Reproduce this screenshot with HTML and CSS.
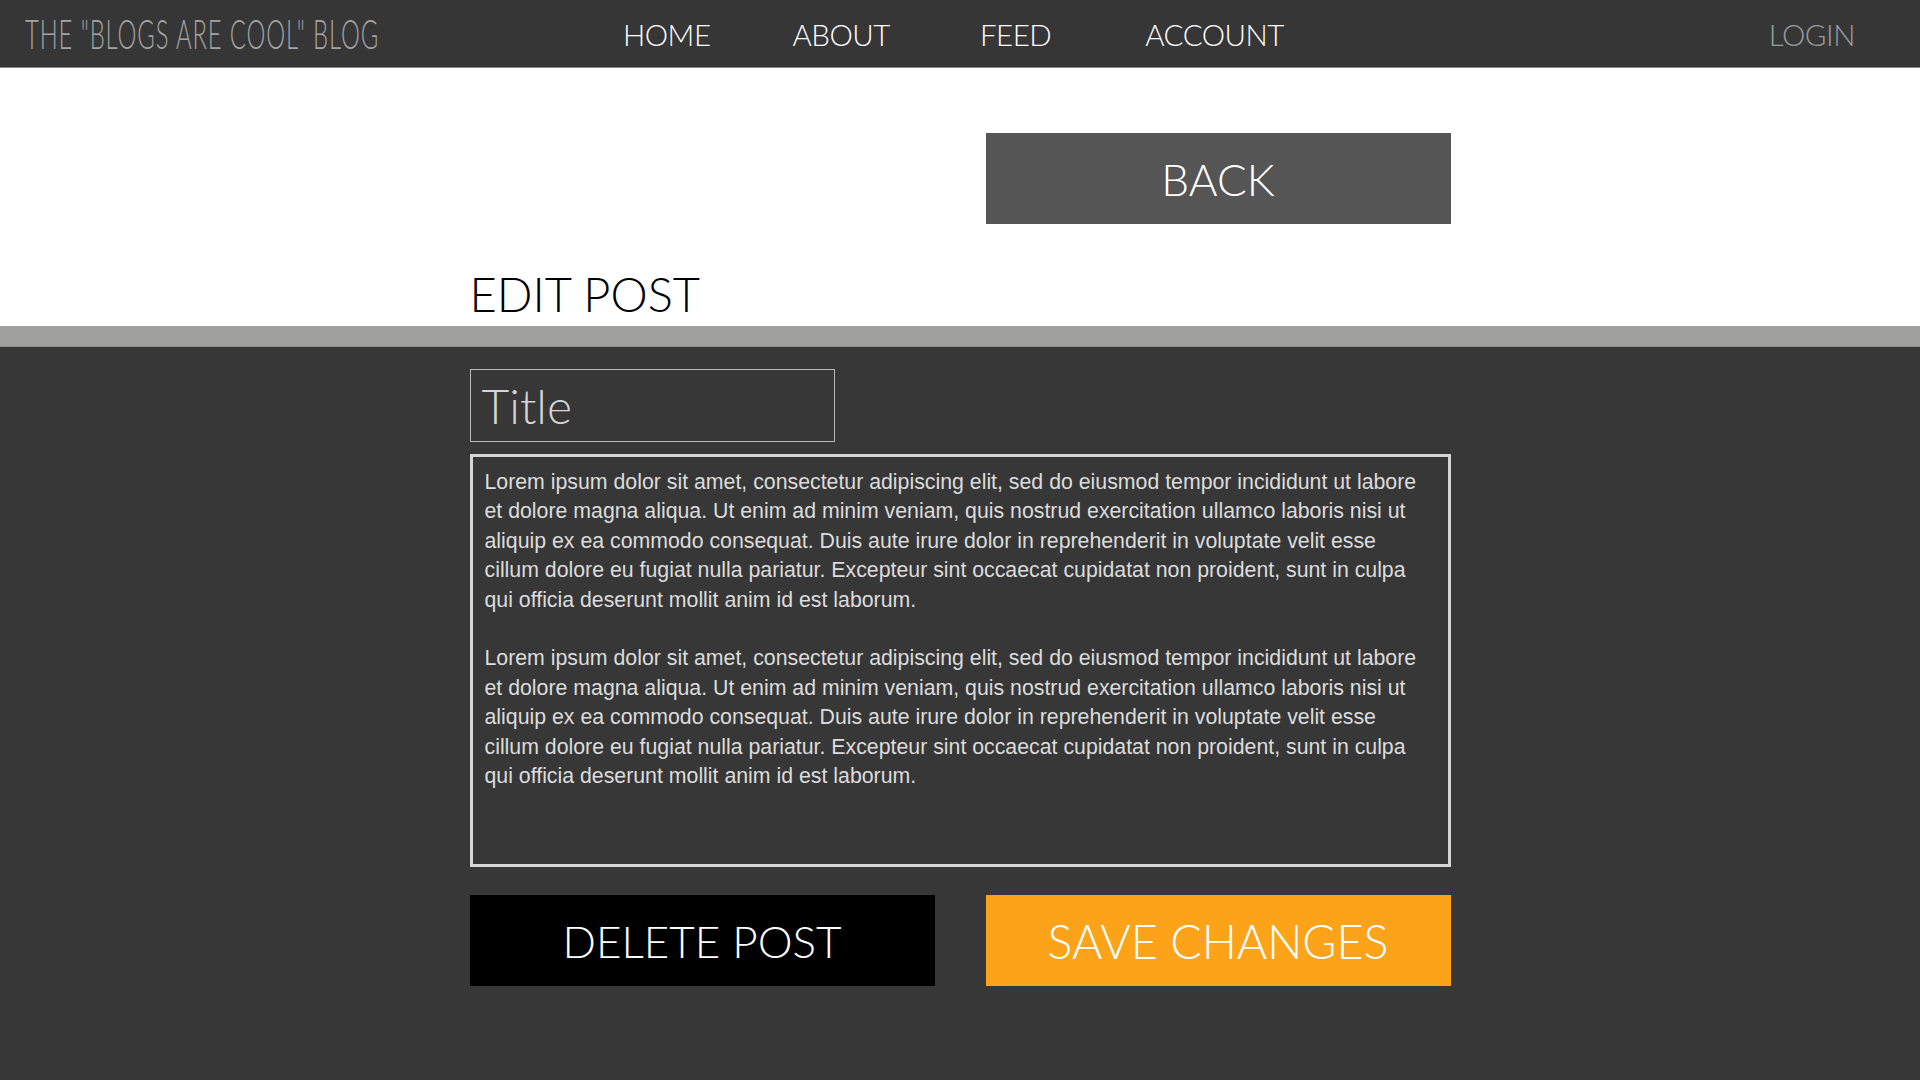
FILE: index.html
```html
<!DOCTYPE html>
<html lang="en">
<head>
<meta charset="utf-8">
<title>Edit Post - The "Blogs Are Cool" Blog</title>
<link rel="stylesheet" href="styles.css">
</head>
<body>
<header class="topbar">
  <div class="brand"><span class="brand-text">THE "BLOGS ARE COOL" BLOG</span></div>
  <nav class="nav">
    <a href="#" class="nav-link">HOME</a>
    <a href="#" class="nav-link nav-about">ABOUT</a>
    <a href="#" class="nav-link nav-feed">FEED</a>
    <a href="#" class="nav-link nav-account">ACCOUNT</a>
  </nav>
  <a href="#" class="login">LOGIN</a>
</header>

<section class="light">
  <div class="wrap">
    <div class="back-row">
      <a href="#" class="btn btn-back">BACK</a>
    </div>
    <h1 class="page-title">EDIT POST</h1>
  </div>
</section>

<div class="band"></div>

<section class="dark">
  <div class="wrap">
    <div class="title-input">Title</div>
    <div class="body-input">
      <p>Lorem ipsum dolor sit amet, consectetur adipiscing elit, sed do eiusmod tempor incididunt ut labore et dolore magna aliqua. Ut enim ad minim veniam, quis nostrud exercitation ullamco laboris nisi ut aliquip ex ea commodo consequat. Duis aute irure dolor in reprehenderit in voluptate velit esse cillum dolore eu fugiat nulla pariatur. Excepteur sint occaecat cupidatat non proident, sunt in culpa qui officia deserunt mollit anim id est laborum.</p>
      <p>Lorem ipsum dolor sit amet, consectetur adipiscing elit, sed do eiusmod tempor incididunt ut labore et dolore magna aliqua. Ut enim ad minim veniam, quis nostrud exercitation ullamco laboris nisi ut aliquip ex ea commodo consequat. Duis aute irure dolor in reprehenderit in voluptate velit esse cillum dolore eu fugiat nulla pariatur. Excepteur sint occaecat cupidatat non proident, sunt in culpa qui officia deserunt mollit anim id est laborum.</p>
    </div>
    <div class="actions">
      <a href="#" class="btn btn-delete">DELETE POST</a>
      <a href="#" class="btn btn-save">SAVE CHANGES</a>
    </div>
  </div>
</section>
</body>
</html>
```
FILE: styles.css
```css
* { box-sizing: border-box; }
html, body { margin: 0; padding: 0; }
body {
  background: #373737;
  font-family: Lato, "Open Sans", sans-serif;
  height: 1080px;
  overflow: hidden;
}
a { text-decoration: none; }

.topbar {
  height: 68px;
  background: #363636;
  border-bottom: 1px solid #8a8a8a;
  display: flex;
  align-items: center;
  padding-right: 65px;
}
.brand {
  width: 623px;
  padding-left: 25px;
  white-space: nowrap;
}
.brand-text {
  display: inline-block;
  font-family: Lato, sans-serif;
  font-weight: 300;
  font-size: 41px;
  line-height: 40px;
  color: #a3a3a3;
  transform: scaleX(0.582);
  transform-origin: left center;
  letter-spacing: 1.5px;
}
.nav {
  display: flex;
  padding-top: 2px;
}
.nav-about { margin-left: 82px; }
.nav-feed { margin-left: 90px; }
.nav-account { margin-left: 94px; }
.nav-link, .login {
  font-family: Lato, sans-serif;
  font-weight: 300;
  font-size: 29.5px;
  color: #ffffff;
  letter-spacing: -0.5px;
}
.login {
  margin-left: auto;
  padding-top: 2px;
  color: #9c9c9c;
}

.light {
  background: #ffffff;
  padding-top: 65px;
}
.wrap {
  width: 981px;
  margin: 0 auto;
}
.back-row {
  display: flex;
  justify-content: flex-end;
}
.btn {
  display: flex;
  align-items: center;
  justify-content: center;
  width: 465px;
  height: 91px;
  color: #ffffff;
  font-family: Lato, sans-serif;
  font-weight: 300;
}
.btn-back {
  background: #555555;
  font-size: 44px;
}
.page-title {
  margin: 42px 0 0;
  font-family: Lato, sans-serif;
  font-weight: 300;
  font-size: 47px;
  line-height: 56px;
  color: #000000;
  padding-bottom: 4px;
}
.band {
  height: 21px;
  background: #a0a09f;
  border-bottom: 1px solid #8d8d8d;
}
.dark {
  background: #373737;
  padding-top: 22px;
}
.title-input {
  width: 365px;
  height: 73px;
  border: 1px solid #b8b8b8;
  display: flex;
  align-items: center;
  padding-left: 11px;
  font-family: Lato, sans-serif;
  font-weight: 300;
  font-size: 48px;
  color: #d6d6d6;
}
.body-input {
  margin-top: 12px;
  height: 413px;
  border: 3px solid #d6d6d6;
  padding: 11px 12px 0 12px;
  font-family: "Liberation Sans", Arial, sans-serif;
  font-size: 21.3px;
  line-height: 29.4px;
  color: #dcdcdc;
}
.body-input p {
  margin: 0 0 29.4px;
}
.actions {
  margin-top: 28px;
  display: flex;
  justify-content: space-between;
}
.btn-delete {
  background: #000000;
  font-size: 44px;
}
.btn-save {
  background: #fda31a;
  font-size: 46.5px;
}
```
